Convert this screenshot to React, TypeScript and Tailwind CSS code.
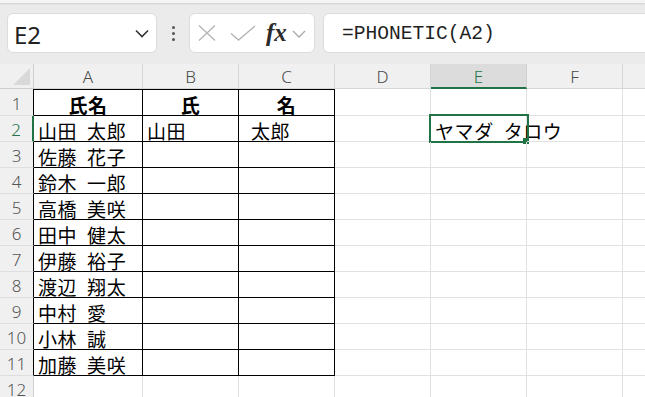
import React from "react";

const COLS = ["A", "B", "C", "D", "E", "F", "G"];
const WIDTHS = ["w-[109px]", "w-[96px]", "w-[96px]", "w-[96px]", "w-[96px]", "w-[96px]", "w-[96px]"];

const names = [
  "山田 太郎",
  "佐藤 花子",
  "鈴木 一郎",
  "高橋 美咲",
  "田中 健太",
  "伊藤 裕子",
  "渡辺 翔太",
  "中村 愛",
  "小林 誠",
  "加藤 美咲",
];

const cellFont = { fontFamily: '"Noto Sans CJK JP", "Noto Sans", sans-serif' };

function getValue(row: number, col: number): string {
  if (row === 1) return ["氏名", "氏", "名"][col] ?? "";
  if (col === 0 && row <= 11) return names[row - 2];
  if (row === 2 && col === 1) return "山田";
  if (row === 2 && col === 2) return "太郎";
  if (row === 2 && col === 4) return "ヤマダ タロウ";
  return "";
}

function Toolbar() {
  return (
    <div className="relative h-[64px] bg-[#ebebeb] flex items-start pt-[13px] overflow-hidden">
      <div className="absolute top-0 left-0 right-0 h-[3px] bg-[#f4f4f4] shadow-[0_1px_2px_rgba(0,0,0,0.12)]" />
      {/* name box */}
      <div className="ml-[7px] w-[150px] h-[40px] bg-white rounded-[6px] border border-[#dcdcdc] flex items-center pl-[6px] pr-[7px] shrink-0">
        <span className="flex-1 text-[24px] text-[#222] pt-[3px] leading-none" style={{ fontFamily: '"Noto Sans", sans-serif' }}>
          E2
        </span>
        <svg width="14" height="9" viewBox="0 0 14 9" fill="none" stroke="#333" strokeWidth="1.6">
          <path d="M1 1.5 L7 7.5 L13 1.5" />
        </svg>
      </div>
      {/* dots */}
      <div className="w-[32px] h-[40px] flex flex-col items-center justify-center gap-[3px] shrink-0">
        <span className="w-[3px] h-[3px] rounded-full bg-[#555]" />
        <span className="w-[3px] h-[3px] rounded-full bg-[#555]" />
        <span className="w-[3px] h-[3px] rounded-full bg-[#555]" />
      </div>
      {/* cancel / enter / fx */}
      <div className="w-[126px] h-[40px] bg-white rounded-[6px] border border-[#dcdcdc] flex items-center shrink-0">
        <svg className="ml-[7px]" width="20" height="18" viewBox="0 0 20 18" fill="none" stroke="#b5b5b5" strokeWidth="1.4">
          <path d="M2 1.5 L18 16.5 M18 1.5 L2 16.5" />
        </svg>
        <svg className="ml-[13px]" width="26" height="16" viewBox="0 0 26 16" fill="none" stroke="#b5b5b5" strokeWidth="1.4">
          <path d="M1 8.5 L8.5 15 L25 1" />
        </svg>
        <span
          className="ml-[10px] italic font-bold text-[25px] text-[#2b2b2b] leading-none pb-[2px]"
          style={{ fontFamily: '"Liberation Serif", "DejaVu Serif", serif' }}
        >
          fx
        </span>
        <svg className="ml-[5px] mt-[1px]" width="14" height="8" viewBox="0 0 14 8" fill="none" stroke="#a8a8a8" strokeWidth="1.3">
          <path d="M1 1 L7 7 L13 1" />
        </svg>
      </div>
      {/* formula bar */}
      <div className="ml-[8px] w-[360px] h-[40px] bg-white rounded-[6px] border border-[#dcdcdc] flex items-center pl-[18px] shrink-0">
        <span
          className="text-[19.6px] text-[#1f1f1f] leading-none pt-[3px]"
          style={{ fontFamily: '"Liberation Mono", "DejaVu Sans Mono", monospace' }}
        >
          =PHONETIC(A2)
        </span>
      </div>
    </div>
  );
}

function HeaderRow() {
  return (
    <div className="flex h-[25px] bg-[#f0f0f0]">
      <div className="w-[34px] h-full shrink-0 border-r border-b border-[#cfcfcf] relative">
        <svg className="absolute left-0 top-0" width="33" height="24">
          <polygon points="30,4 30,21 13,21" fill="#d9d9d9" />
        </svg>
      </div>
      {COLS.map((c, i) => {
        const sel = c === "E";
        return (
          <div
            key={c}
            className={`${WIDTHS[i]} shrink-0 h-full flex items-center justify-center text-[17px] font-light leading-none ${
              sel
                ? "bg-[#dcdcdc] text-[#217346] border-b-2 border-b-[#217346] border-r border-r-[#cfcfcf] pt-[2px]"
                : "text-[#4a4a4a] border-r border-b border-[#d6d6d6]"
            }`}
            style={{ fontFamily: '"Noto Sans", sans-serif' }}
          >
            {c === "G" ? "" : c}
          </div>
        );
      })}
    </div>
  );
}

function Row({ r }: { r: number }) {
  const boxed = r <= 11;
  const rowSel = r === 2;
  return (
    <div className={`flex ${r === 1 ? "h-[27px]" : "h-[26px]"}`}>
      <div
        className={`h-full shrink-0 bg-[#f0f0f0] border-b border-b-[#dedede] flex items-center justify-center text-[17px] font-light leading-none pt-[2px] ${
          rowSel
            ? "w-[34px] border-r-2 border-r-[#217346] text-[#217346]"
            : boxed
            ? "w-[34px] border-r border-r-black text-[#555]"
            : "w-[34px] border-r border-r-[#cfcfcf] text-[#555]"
        }`}
        style={{ fontFamily: '"Noto Sans", sans-serif' }}
      >
        {r}
      </div>
      {COLS.map((c, i) => {
        const inBox = boxed && i <= 2;
        const v = getValue(r, i);
        const isSel = r === 2 && c === "E";
        const center = r === 1;
        return (
          <div
            key={c}
            className={`${WIDTHS[i]} shrink-0 h-full relative flex items-center whitespace-nowrap border-r border-b text-[19px] tracking-[0.6px] text-black leading-none pt-[3px] [word-spacing:5px] ${
              inBox ? "border-r-black border-b-black" : "border-r-[#e1e1e1] border-b-[#e1e1e1]"
            } ${r === 1 && inBox ? "border-t border-t-black" : ""} ${
              center ? "justify-center font-bold" : r === 2 && i === 2 ? "pl-[12px]" : "pl-[4px]"
            }`}
            style={cellFont}
          >
            {v}
            {isSel && (
              <>
                <div className="absolute -left-[2px] -top-[2px] -right-[3px] -bottom-[2px] border-2 border-[#217346]" />
                <div className="absolute -right-[3px] -bottom-[3px] w-[6px] h-[6px] bg-[#217346]" />
              </>
            )}
          </div>
        );
      })}
    </div>
  );
}

export default function App() {
  return (
    <div className="w-[645px] h-[397px] overflow-hidden bg-white">
      <Toolbar />
      <HeaderRow />
      {Array.from({ length: 12 }, (_, i) => (
        <Row key={i} r={i + 1} />
      ))}
    </div>
  );
}
